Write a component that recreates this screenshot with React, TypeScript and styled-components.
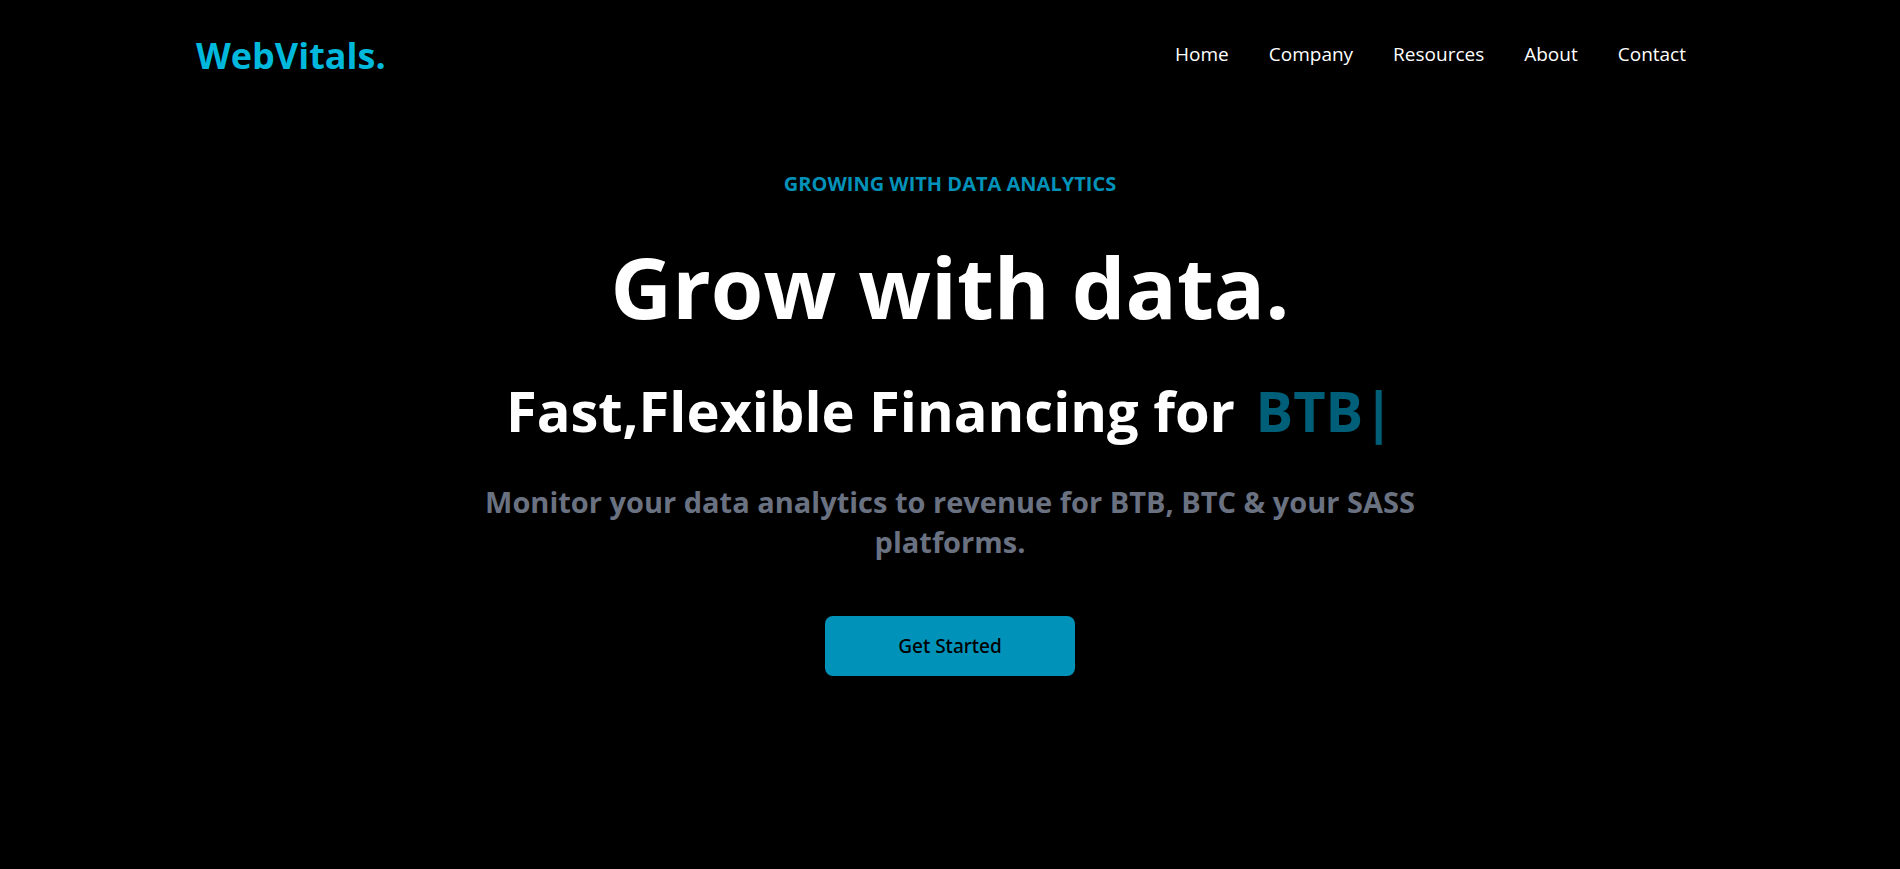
import React from "react";
import styled, { createGlobalStyle } from "styled-components";

const GlobalStyle = createGlobalStyle`
  *, *::before, *::after { box-sizing: border-box; }
  body { margin: 0; background: #000; color: #fff; font-family: "Open Sans", "Noto Sans", sans-serif; }
  h1, h2, p, ul { margin: 0; padding: 0; }
`;

const Header = styled.header`
  display: flex;
  align-items: center;
  justify-content: space-between;
  max-width: 1540px;
  height: 108px;
  margin: 0 auto;
  padding: 0 14px 0 16px;
`;

const Logo = styled.a`
  padding-top: 4px;
  color: #00b8db;
  font-size: 36px;
  font-weight: 700;
  line-height: 40px;
  text-decoration: none;
`;

const NavList = styled.ul`
  display: flex;
  list-style: none;
`;

const NavLink = styled.a`
  display: block;
  padding: 16px 20px;
  color: #fff;
  font-size: 19px;
  line-height: 28px;
  text-decoration: none;
`;

const Hero = styled.main`
  display: flex;
  flex-direction: column;
  align-items: center;
  max-width: 1000px;
  margin: 0 auto;
  padding: 62px 16px;
  text-align: center;
`;

const Eyebrow = styled.p`
  color: #0092b8;
  font-size: 20px;
  font-weight: 700;
  line-height: 28px;
`;

const Title = styled.h1`
  padding: 38px 0;
  font-size: 85px;
  font-weight: 700;
  line-height: 100px;
`;

const Subtitle = styled.h2`
  font-size: 56px;
  font-weight: 700;
  line-height: 72px;
`;

const Typed = styled.span`
  padding-left: 6px;
  color: #005f78;
`;

const Lead = styled.p`
  padding: 36px 0 54px;
  color: #6a7282;
  font-size: 29px;
  font-weight: 700;
  line-height: 40px;
`;

const Button = styled.button`
  width: 250px;
  height: 60px;
  border: 0;
  border-radius: 8px;
  background: #0092b8;
  color: #000;
  font: 500 19px/28px "Noto Sans", "Open Sans", sans-serif;
  cursor: pointer;
`;

const links = ["Home", "Company", "Resources", "About", "Contact"];

export default function App() {
  return (
    <>
      <GlobalStyle />
      <Header>
        <Logo href="#">WebVitals.</Logo>
        <nav>
          <NavList>
            {links.map((label) => (
              <li key={label}>
                <NavLink href={`#${label.toLowerCase()}`}>{label}</NavLink>
              </li>
            ))}
          </NavList>
        </nav>
      </Header>
      <Hero>
        <Eyebrow>GROWING WITH DATA ANALYTICS</Eyebrow>
        <Title>Grow with data.</Title>
        <Subtitle>
          Fast,Flexible Financing for <Typed>BTB|</Typed>
        </Subtitle>
        <Lead>Monitor your data analytics to revenue for BTB, BTC &amp; your SASS platforms.</Lead>
        <Button type="button">Get Started</Button>
      </Hero>
    </>
  );
}
